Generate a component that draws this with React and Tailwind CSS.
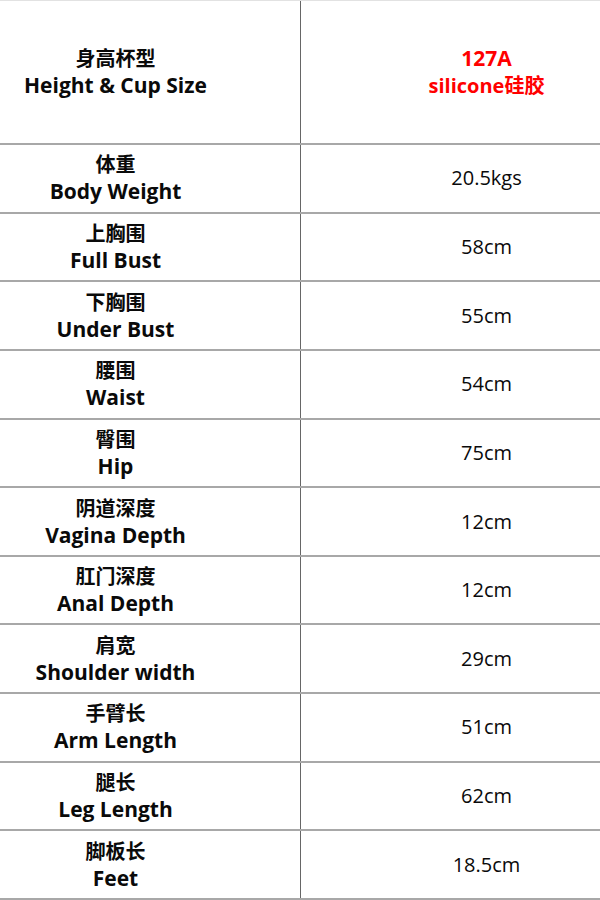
import React from "react";

const rows = [
  ["体重", "Body Weight", "20.5kgs"],
  ["上胸围", "Full Bust", "58cm"],
  ["下胸围", "Under Bust", "55cm"],
  ["腰围", "Waist", "54cm"],
  ["臀围", "Hip", "75cm"],
  ["阴道深度", "Vagina Depth", "12cm"],
  ["肛门深度", "Anal Depth", "12cm"],
  ["肩宽", "Shoulder width", "29cm"],
  ["手臂长", "Arm Length", "51cm"],
  ["腿长", "Leg Length", "62cm"],
  ["脚板长", "Feet", "18.5cm"],
];

const font = { fontFamily: '"Open Sans", "Noto Sans CJK SC", sans-serif' };

export default function App() {
  return (
    <div
      className="w-[600px] h-[900px] bg-white flex flex-col border-t border-[#e2e2e2] text-[#0a0a0a]"
      style={font}
    >
      <div className="h-[142px] flex">
        <div className="w-[301px] pr-[69px] border-r border-[#666] flex flex-col items-center justify-center font-bold leading-[27px]">
          <div className="text-[20px]">身高杯型</div>
          <div className="text-[21px]">Height &amp; Cup Size</div>
        </div>
        <div className="flex-1 pl-[72px] flex flex-col items-center justify-center font-bold text-[20px] leading-[27px] text-[#ff0000]">
          <div className="text-[21px]">127A</div>
          <div>silicone硅胶</div>
        </div>
      </div>
      {rows.map(([cn, en, val], i) => (
        <div
          key={i}
          className={
            "flex-1 flex border-t-2 border-[#a8a8a8]" +
            (i === rows.length - 1 ? " border-b-2" : "")
          }
        >
          <div className="w-[301px] pr-[69px] border-r border-[#666] flex flex-col items-center justify-center font-bold leading-[27px]">
            <div className="text-[20px]">{cn}</div>
            <div className="text-[21px]">{en}</div>
          </div>
          <div className="flex-1 pl-[72px] flex items-center justify-center text-[20px]">
            {val}
          </div>
        </div>
      ))}
    </div>
  );
}
